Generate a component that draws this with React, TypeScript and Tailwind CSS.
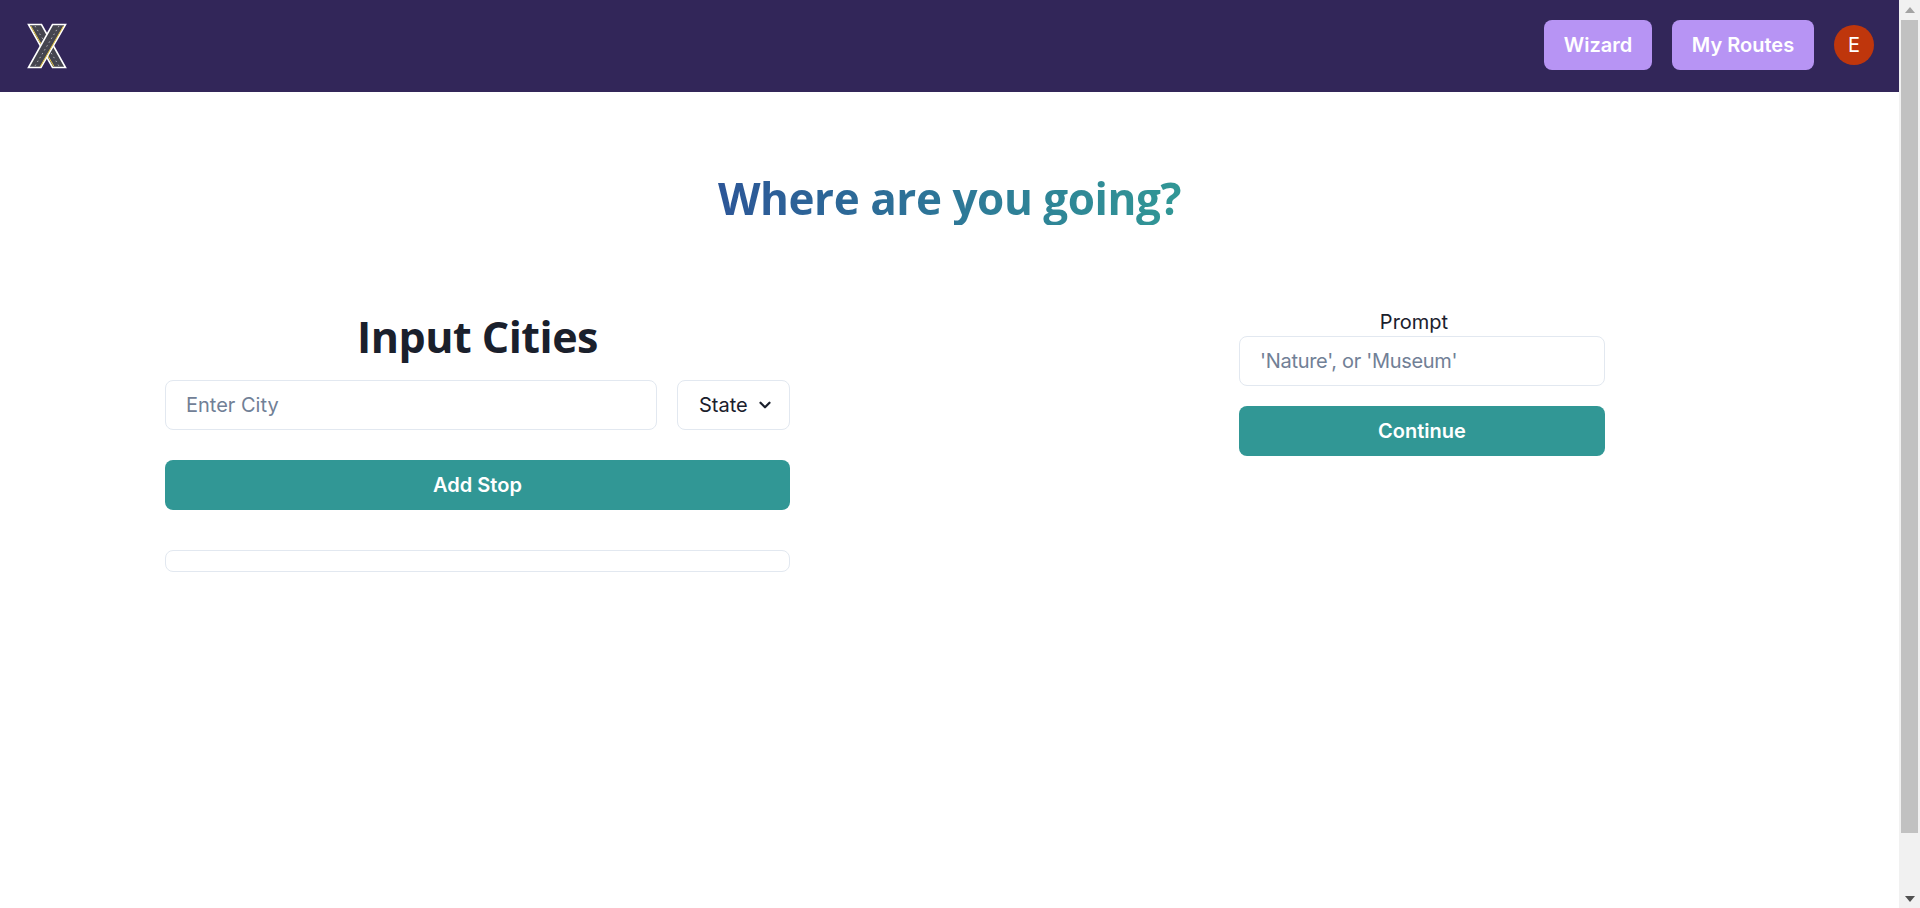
import React from "react";
import { ChevronDown } from "lucide-react";

function Logo() {
  return (
    <svg width="40" height="46" viewBox="0 0 40 46" aria-label="logo">
      <path d="M1.5 1.5H14.5L38.5 44.5H25.5Z" fill="#45454f" stroke="#ffffff" strokeWidth="1.6" strokeLinejoin="miter" />
      <path d="M3.8 3L27 43.5" stroke="#e8c84a" strokeWidth="1" fill="none" />
      <path d="M8 3L32 43" stroke="#c9c9d2" strokeWidth="0.8" strokeDasharray="1.5 3" fill="none" />
      <path d="M25.5 1.5H38.5L14 44.5H1.5Z" fill="#45454f" stroke="#ffffff" strokeWidth="1.6" strokeLinejoin="miter" />
      <path d="M36.5 3L13 44" stroke="#e8c84a" strokeWidth="1" fill="none" />
      <path d="M32 3L8 43" stroke="#c9c9d2" strokeWidth="0.8" strokeDasharray="1.5 3" fill="none" />
    </svg>
  );
}

function Scrollbar() {
  return (
    <aside className="flex h-full w-[21px] shrink-0 flex-col items-center bg-[#f1f1f1]">
      <div className="flex h-5 w-full shrink-0 items-center justify-center">
        <svg width="10" height="6" viewBox="0 0 10 6"><path d="M5 0L10 6H0Z" fill="#a3a3a3" /></svg>
      </div>
      <div className="h-[813px] w-[17px] shrink-0 bg-[#c1c1c1]" />
      <div className="flex flex-1 items-end justify-center pb-[6px]">
        <svg width="10" height="6" viewBox="0 0 10 6"><path d="M0 0H10L5 6Z" fill="#505050" /></svg>
      </div>
    </aside>
  );
}

export default function App() {
  return (
    <div className="flex h-[908px] overflow-hidden bg-white font-['Inter',sans-serif] text-[#1a202c]">
      <main className="flex min-w-0 flex-1 flex-col">
        <header className="flex h-[92px] shrink-0 items-center justify-between bg-[#322659] pl-[27px] pr-[25px]">
          <Logo />
          <div className="mb-[2px] flex items-center gap-5">
            <button className="h-[50px] w-[108px] rounded-lg bg-[#b794f4] text-[20px] font-semibold text-white">Wizard</button>
            <button className="h-[50px] w-[142px] rounded-lg bg-[#b794f4] text-[20px] font-semibold text-white">My Routes</button>
            <div className="flex h-10 w-10 items-center justify-center rounded-full bg-[#bf360c] text-[20px] text-white">E</div>
          </div>
        </header>

        <h1 className="mx-auto mt-[79px] w-fit bg-linear-to-r from-[#2c5697] to-[#319795] bg-clip-text font-['Open_Sans',sans-serif] text-[44px] leading-[54px] font-bold tracking-[-0.43px] text-transparent">
          Where are you going?
        </h1>

        <div className="mt-[85px] flex items-start pl-[165px]">
          <section className="flex w-[625px] flex-col">
            <h2 className="text-center font-['Open_Sans',sans-serif] text-[43px] leading-[54px] font-bold tracking-[-0.5px]">Input Cities</h2>
            <div className="mt-[16px] flex gap-5">
              <input
                className="h-[50px] min-w-0 flex-1 rounded-lg border border-[#e2e8f0] bg-white px-5 text-[20px] outline-none placeholder:text-[#718096]"
                placeholder="Enter City"
              />
              <div className="flex h-[50px] w-[113px] items-center gap-2 rounded-lg border border-[#e2e8f0] pl-[21px] text-[20px]">
                <span>State</span>
                <ChevronDown size={18} strokeWidth={3} />
              </div>
            </div>
            <button className="mt-[30px] h-[50px] w-full rounded-lg bg-[#319795] text-[20px] font-semibold text-white">Add Stop</button>
            <div className="mt-10 h-[22px] rounded-lg border border-[#e2e8f0]" />
          </section>

          <section className="ml-[449px] flex w-[366px] flex-col">
            <label className="mb-[2px] pr-4 text-center text-[20px] leading-[24px]">Prompt</label>
            <input
              className="h-[50px] rounded-lg border border-[#e2e8f0] bg-white px-5 text-[20px] tracking-[-0.3px] outline-none placeholder:text-[#718096]"
              placeholder="'Nature', or 'Museum'"
            />
            <button className="mt-5 h-[50px] rounded-lg bg-[#319795] text-[20px] font-semibold text-white">Continue</button>
          </section>
        </div>
      </main>
      <Scrollbar />
    </div>
  );
}
